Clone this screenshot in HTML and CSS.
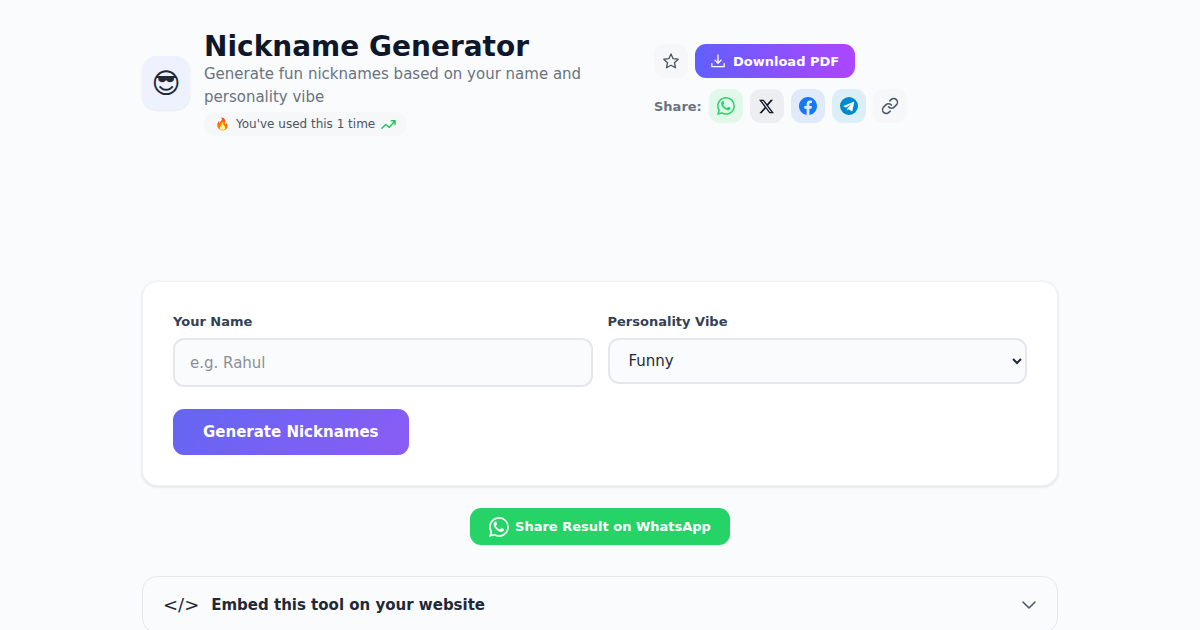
FILE: index.html
```html
<!DOCTYPE html>
<html lang="en">
  <head>
    <meta charset="utf-8">
    <meta name="viewport" content="width=device-width, initial-scale=1">
    <title>Nickname Generator</title>
    <link rel="stylesheet" href="styles.css">
  </head>
  <body>
    <svg width="0" height="0" class="sprite" aria-hidden="true">
      <symbol id="whatsapp" viewBox="0 0 16 16">
        <path d="M13.601 2.326A7.85 7.85 0 0 0 7.994 0C3.627 0 .068 3.558.064 7.926c0 1.399.366 2.76 1.057 3.965L0 16l4.204-1.102a7.9 7.9 0 0 0 3.79.965h.004c4.368 0 7.926-3.558 7.93-7.93A7.9 7.9 0 0 0 13.6 2.326zM7.994 14.521a6.6 6.6 0 0 1-3.356-.92l-.24-.144-2.494.654.666-2.433-.156-.251a6.56 6.56 0 0 1-1.007-3.505c0-3.626 2.957-6.584 6.591-6.584a6.56 6.56 0 0 1 4.66 1.931 6.56 6.56 0 0 1 1.928 4.66c-.004 3.639-2.961 6.592-6.592 6.592M6 4c-.2-.4-.4-.4-.7-.4-.3 0-.6.1-.9.5-.6.7-.9 1.5-.6 2.5.4 1.5 1.5 2.9 2.8 3.9 1.2.9 2.6 1.5 3.8 1.2.8-.2 1.5-.8 1.600-1.400.1-.4.1-.6-.1-.8l-1.700-.8c-.3-.1-.5 0-.6.2l-.6.8c-.2.2-.4.2-.6.1-1.300-.6-2.200-1.400-2.800-2.500-.1-.2 0-.4.1-.5l.5-.6c.1-.2.1-.3 0-.6z"/>
      </symbol>
    </svg>
    <main class="container">
      <header class="tool-header">
        <div class="tool-info">
          <div class="tool-icon">😎</div>
          <div>
            <h1>Nickname Generator</h1>
            <p class="tagline">Generate fun nicknames based on your name and personality vibe</p>
            <p class="usage">
              <span class="fire">🔥</span>
              <span>You've used this 1 time</span>
              <svg width="15" height="15" viewBox="0 0 16 16" fill="none" stroke="#22c55e" stroke-width="1.5" stroke-linecap="round" stroke-linejoin="round"><path d="M1 12l4-4 4 3 6-7M11 4h4v4"/></svg>
            </p>
          </div>
        </div>
        <div class="actions">
          <div class="row">
            <button class="square plain" aria-label="Add to favourites">
              <svg width="16" height="16" viewBox="0 0 24 24" fill="none" stroke="currentColor" stroke-width="2" stroke-linejoin="round"><path d="M12 1.5l3.2 7 7.6.9-5.6 5.2 1.5 7.5L12 18.4l-6.700 3.700 1.500-7.500L1.200 9.400l7.600-.9z"/></svg>
            </button>
            <button class="download">
              <svg width="14" height="14" viewBox="0 0 16 16" fill="none" stroke="currentColor" stroke-width="1.5" stroke-linecap="round" stroke-linejoin="round"><path d="M8 1v9M4.500 7L8 10.500 11.500 7M1 11v3.500h14V11"/></svg>
              Download PDF
            </button>
          </div>
          <div class="row">
            <span class="share-label">Share:</span>
            <a href="#" class="square whatsapp" aria-label="WhatsApp"><svg width="18" height="18" fill="currentColor"><use href="#whatsapp"/></svg></a>
            <a href="#" class="square x" aria-label="X">
              <svg width="15" height="15" viewBox="0 0 24 24" fill="currentColor"><path d="M18.900 1.150h3.680l-8.040 9.190L24 22.850h-7.410l-5.800-7.590-6.640 7.590H.470l8.600-9.830L0 1.150h7.590l5.240 6.930zM17.610 20.640h2.040L6.490 3.240H4.300z"/></svg>
            </a>
            <a href="#" class="square facebook" aria-label="Facebook">
              <svg width="18" height="18" viewBox="0 0 16 16" fill="currentColor"><path d="M16 8.049c0-4.446-3.582-8.050-8-8.050C3.580 0-.002 3.603-.002 8.050c0 4.017 2.926 7.347 6.750 7.951v-5.625h-2.030V8.050H6.750V6.275c0-2.017 1.195-3.131 3.022-3.131.876 0 1.791.157 1.791.157v1.980h-1.009c-.993 0-1.303.621-1.303 1.258v1.510h2.218l-.354 2.326H9.250V16c3.824-.604 6.750-3.934 6.750-7.951"/></svg>
            </a>
            <a href="#" class="square telegram" aria-label="Telegram">
              <svg width="18" height="18" viewBox="0 0 16 16"><circle cx="8" cy="8" r="8" fill="currentColor"/><path fill="#fff" d="M12.200 4.300L3.200 7.900c-.4.200-.4.5 0 .6l2.300.8 5-3.300-3.900 3.900-.1 2.200 1.300-1.200 2.400 1.700c.4.200.7.1.8-.4l1.600-7.400c.1-.4-.1-.6-.4-.5z"/></svg>
            </a>
            <a href="#" class="square plain" aria-label="Copy link">
              <svg width="18" height="18" viewBox="0 0 24 24" fill="none" stroke="currentColor" stroke-width="2" stroke-linecap="round"><path d="M10 13a5 5 0 0 0 7.540.540l3-3a5 5 0 0 0-7.070-7.070l-1.720 1.710M14 11a5 5 0 0 0-7.540-.540l-3 3a5 5 0 0 0 7.070 7.070l1.710-1.710"/></svg>
            </a>
          </div>
        </div>
      </header>

      <form class="card">
        <div class="fields">
          <div class="field">
            <label for="name">Your Name</label>
            <input type="text" id="name" placeholder="e.g. Rahul">
          </div>
          <div class="field">
            <label for="vibe">Personality Vibe</label>
            <select id="vibe">
              <option>Funny</option>
              <option>Cool</option>
              <option>Cute</option>
            </select>
          </div>
        </div>
        <button type="button" class="generate">Generate Nicknames</button>
      </form>

      <button class="share-result">
        <svg width="20" height="20" fill="currentColor"><use href="#whatsapp"/></svg>
        Share Result on WhatsApp
      </button>

      <button class="embed">
        <span class="code">&lt;/&gt;</span>
        <span class="embed-title">Embed this tool on your website</span>
        <svg width="14" height="14" viewBox="0 0 14 14" fill="none" stroke="#4b5563" stroke-width="1.5" stroke-linecap="round" stroke-linejoin="round"><path d="M1 4l6 6 6-6"/></svg>
      </button>
    </main>
  </body>
</html>
```
FILE: styles.css
```css
* {
  box-sizing: border-box;
  margin: 0;
}

body {
  background: #f9fbfd;
  color: #1f2937;
  font-family: "DejaVu Sans", sans-serif;
  font-size: 15px;
}

button,
input,
select {
  font-family: inherit;
  font-size: 15px;
}

button {
  border: 0;
  cursor: pointer;
}

.sprite {
  position: absolute;
}

.container {
  max-width: 948px;
  margin: 0 auto;
  padding: 30px 16px;
}

.tool-header {
  display: grid;
  grid-template-columns: 448px 1fr;
  gap: 64px;
  min-height: 251px;
  align-items: start;
}

.tool-info {
  display: flex;
  align-items: center;
  gap: 14px;
}

.tool-icon {
  display: flex;
  flex: none;
  align-items: center;
  justify-content: center;
  width: 48px;
  height: 54px;
  border-radius: 15px;
  background: #eef2ff;
  box-shadow: 0 1px 2px rgba(0, 0, 0, .08);
  font-size: 28px;
}

h1 {
  color: #0f172a;
  font-size: 28px;
  line-height: 33px;
}

.tagline {
  color: #6b7280;
  line-height: 23px;
}

.usage {
  display: inline-flex;
  align-items: center;
  gap: 6px;
  margin-top: 3px;
  padding: 0 11px;
  border-radius: 12px;
  background: #f6f7f9;
  color: #4b5563;
  font-size: 12px;
  line-height: 24px;
}

.actions {
  display: grid;
  gap: 11px;
  padding-top: 14px;
}

.row {
  display: flex;
  align-items: center;
  gap: 7px;
}

.square {
  display: flex;
  align-items: center;
  justify-content: center;
  width: 34px;
  height: 34px;
  padding: 0;
  border-radius: 11px;
}

.plain {
  background: #f6f7f9;
  color: #4b5563;
}

.whatsapp {
  background: #e2f8ea;
  color: #25d366;
}

.x {
  background: #edeef1;
  color: #111827;
}

.facebook {
  background: #e0eafb;
  color: #1877f2;
}

.telegram {
  background: #dceef6;
  color: #0088cc;
}

.download {
  display: flex;
  align-items: center;
  gap: 8px;
  height: 34px;
  padding: 0 16px;
  border-radius: 11px;
  background: linear-gradient(90deg, #615fff, #ad46ff);
  color: #fff;
  font-size: 13px;
  font-weight: bold;
}

.share-label {
  color: #6b7280;
  font-size: 13px;
  font-weight: bold;
}

.card {
  padding: 30px;
  border: 1px solid #f0f2f5;
  border-radius: 15px;
  background: #fff;
  box-shadow: 0 1px 3px rgba(0, 0, 0, .12);
}

.fields {
  display: grid;
  grid-template-columns: 1fr 1fr;
  align-items: start;
  gap: 15px;
}

.field label {
  display: block;
  margin-bottom: 6px;
  color: #334155;
  font-size: 13px;
  font-weight: bold;
  line-height: 20px;
}

.field input,
.field select {
  display: block;
  width: 100%;
  height: 49px;
  padding: 0 15px;
  border: 2px solid #e5e7eb;
  border-radius: 11px;
  background: #f9fbfd;
  color: #1f2937;
}

.field input::placeholder {
  color: #8b8f96;
}

.field select {
  height: 46px;
}

.generate {
  height: 46px;
  margin-top: 22px;
  padding: 0 30px;
  border-radius: 11px;
  background: linear-gradient(135deg, #6366f1, #8b5cf6);
  color: #fff;
  font-weight: bold;
}

.share-result {
  display: flex;
  align-items: center;
  gap: 6px;
  height: 37px;
  margin: 22px auto 31px;
  padding: 0 19px;
  border-radius: 11px;
  background: #25d366;
  color: #fff;
  font-size: 13px;
  font-weight: bold;
}

.embed {
  display: flex;
  align-items: center;
  gap: 12px;
  width: 100%;
  height: 57px;
  padding: 0 21px 0 20px;
  border: 1px solid #e5e7eb;
  border-radius: 15px;
  background: #f9fbfd;
  color: #1f2937;
  text-align: left;
}

.code {
  font-size: 18px;
}

.embed-title {
  flex: 1;
  font-weight: bold;
}
```
